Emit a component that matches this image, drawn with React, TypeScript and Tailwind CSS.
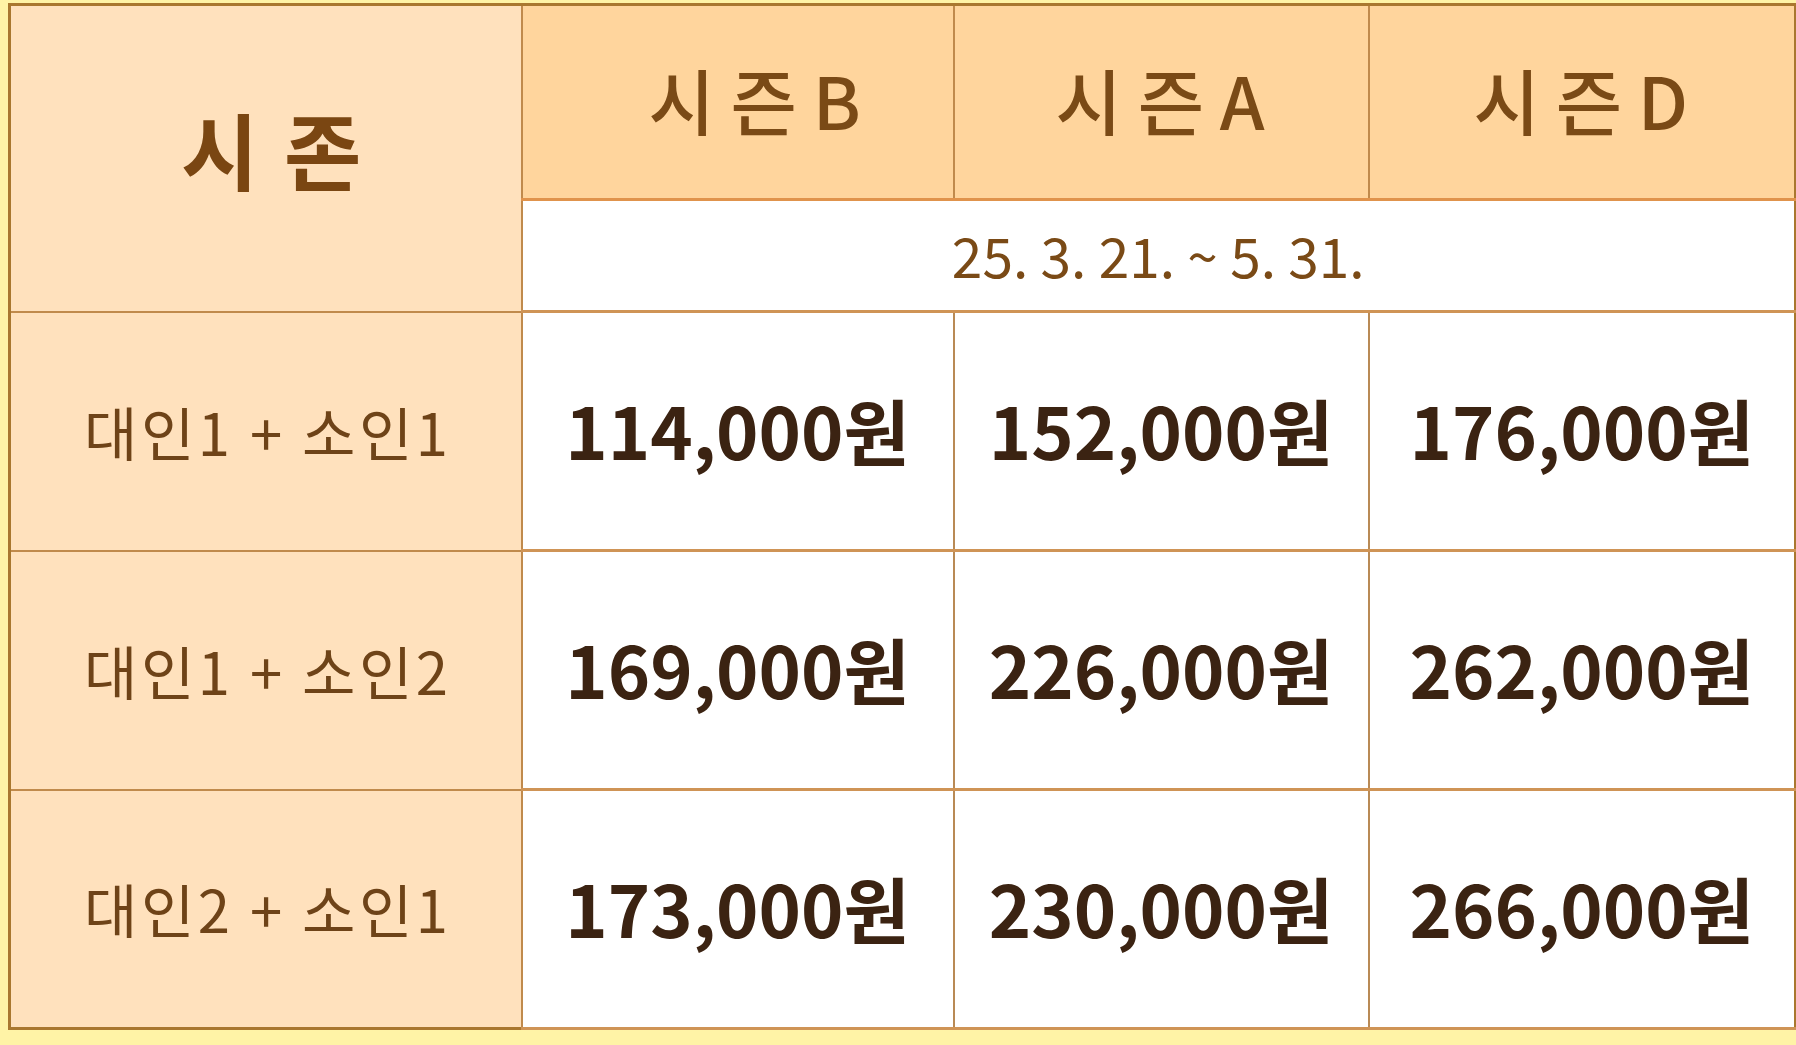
const seasons = ["시즌B", "시즌A", "시즌D"]

const rows = [
  { label: "대인1 + 소인1", prices: ["114,000원", "152,000원", "176,000원"] },
  { label: "대인1 + 소인2", prices: ["169,000원", "226,000원", "262,000원"] },
  { label: "대인2 + 소인1", prices: ["173,000원", "230,000원", "266,000원"] },
]

const font = { fontFamily: '"Noto Sans CJK KR", "Noto Sans", sans-serif' }

export default function App() {
  return (
    <div className="w-[1796px] h-[1045px] bg-[#fff3a6] pt-[3px] pl-[8px]" style={font}>
      <table className="w-[1786px] border-collapse border-[3px] border-[#a9772f] table-fixed">
        <colgroup>
          <col className="w-[512px]" />
          <col className="w-[432px]" />
          <col className="w-[415px]" />
          <col className="w-[427px]" />
        </colgroup>
        <thead>
          <tr className="h-[195px]">
            <th
              rowSpan={2}
              className="bg-[#ffe1bd] border-2 border-[#c08a4c] text-[84px] font-bold text-[#7a4612] tracking-[0.04em] align-middle pb-[18px] pl-[14px]"
            >
              시 존
            </th>
            {seasons.map((s, i) => (
              <th
                key={s}
                className={
                  "bg-[#ffd59d] border-x-2 border-[#c08a4c] border-b-[3px] border-b-[#e0934c] text-[72px] font-medium text-[#7a4a16] tracking-[0.22em] pb-[6px] " +
                  (i === 0 ? "pl-[50px]" : "pl-[14px]")
                }
              >
                {s}
              </th>
            ))}
          </tr>
          <tr className="h-[112px]">
            <td
              colSpan={3}
              className="bg-white border-2 border-[#c08a4c] text-center text-[55px] text-[#7a4a16] tracking-[0em] pb-[2px]"
            >
              25. 3. 21. ~ 5. 31.
            </td>
          </tr>
        </thead>
        <tbody>
          {rows.map((r) => (
            <tr key={r.label} className="h-[239px]">
              <td className="bg-[#ffe1bd] border-2 border-[#c08a4c] text-center text-[58px] text-[#6e4318] tracking-[0.06em] pl-[4px]">
                {r.label}
              </td>
              {r.prices.map((p) => (
                <td
                  key={p}
                  className="bg-white border-x-2 border-y-[3px] border-x-[#b98a55] border-y-[#cf9456] text-center text-[72px] font-bold text-[#3b2312] tracking-[0em] pb-[4px]"
                >
                  {p}
                </td>
              ))}
            </tr>
          ))}
        </tbody>
      </table>
    </div>
  )
}
